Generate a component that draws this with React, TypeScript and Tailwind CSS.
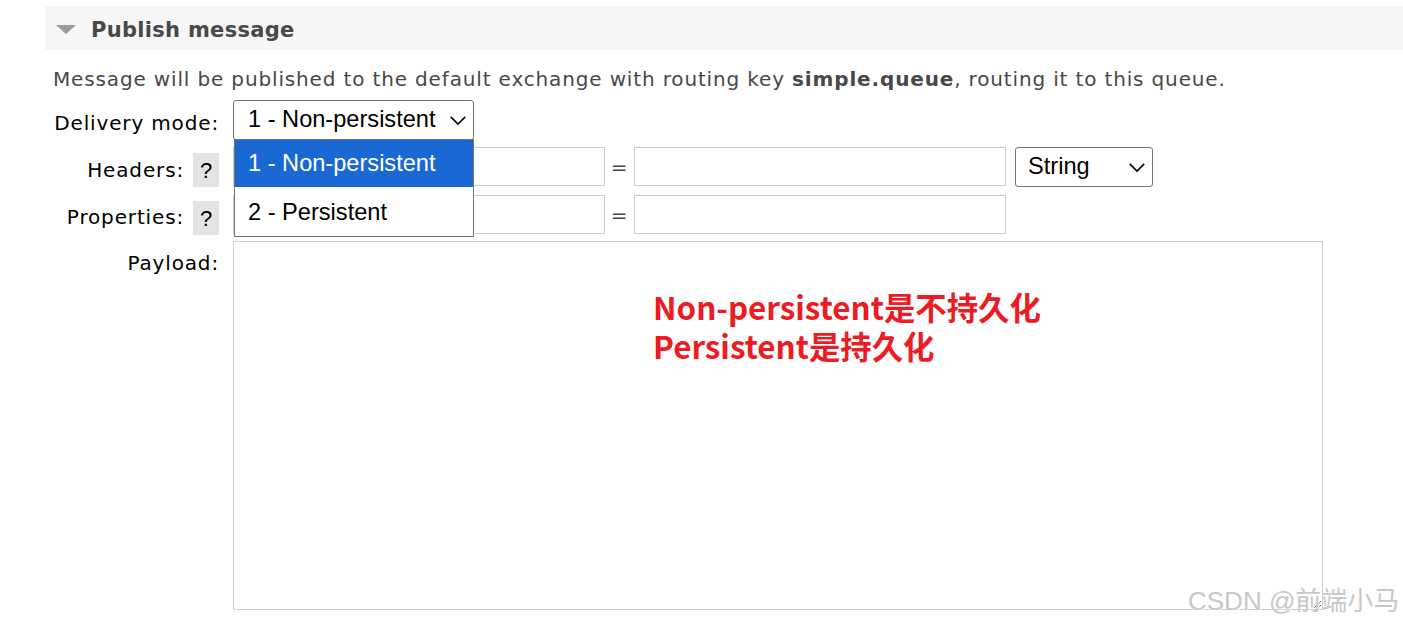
import React from "react";

const verdana = { fontFamily: '"DejaVu Sans", Verdana, sans-serif' };

function Chevron({ className }: { className?: string }) {
  return (
    <svg viewBox="0 0 20 12" className={className} fill="none" stroke="currentColor" strokeWidth="1.7">
      <path d="M2 2 L10 10 L18 2" />
    </svg>
  );
}

function HelpBox() {
  return (
    <span className="flex h-[34px] w-[26px] items-center justify-center bg-[#e4e4e4] text-[22px] tracking-normal text-black font-['Liberation_Sans',sans-serif]">
      ?
    </span>
  );
}

function KeyValueRow() {
  return (
    <div className="flex items-center">
      <input className="h-[39px] w-[372px] border border-[#cccccc] bg-white outline-none" />
      <span className="w-[29px] text-center text-[20px] text-[#484848]">=</span>
      <input className="h-[39px] w-[372px] border border-[#cccccc] bg-white outline-none" />
    </div>
  );
}

export default function App() {
  return (
    <div className="relative h-[626px] w-[1403px] overflow-hidden bg-white" style={verdana}>
      {/* Section header */}
      <div className="ml-[45px] mt-[6px] flex h-[44px] items-center bg-[#f6f6f6] pl-[11px]">
        <svg width="20" height="10" viewBox="0 0 20 10" className="mt-[3px]">
          <polygon points="0,0 20,0 10,9" fill="#9a9a9a" />
        </svg>
        <h2 className="ml-[15px] mt-[5px] text-[21px] font-bold tracking-[0.3px] text-[#484848]">Publish message</h2>
      </div>

      <div className="pl-[53px] tracking-[0.85px]">
        <p className="mt-[16px] text-[20px] leading-[26px] text-[#484848]">
          Message will be published to the default exchange with routing key{" "}
          <b>simple.queue</b>, routing it to this queue.
        </p>

        <div className="mt-[8px] grid grid-cols-[166px_1fr] gap-x-[14px] text-[20px] text-black">
          {/* Delivery mode */}
          <label className="mt-[8px] text-right">Delivery mode:</label>
          <div className="relative h-[40px]">
            <div className="flex h-[40px] w-[241px] items-center justify-between rounded-[3px] border border-[#767676] bg-white pl-[14px] pr-[6px] text-[23.6px] tracking-normal font-['Liberation_Sans',sans-serif]">
              <span>1 - Non-persistent</span>
              <Chevron className="h-[11px] w-[18px]" />
            </div>
            {/* Open dropdown list */}
            <div className="absolute left-[1px] top-[39px] z-10 w-[240px] border border-[#767676] bg-white text-[23.6px] tracking-normal font-['Liberation_Sans',sans-serif]">
              <div className="flex h-[47px] items-center bg-[#1a68d3] pl-[13px] pt-[1px] text-white">1 - Non-persistent</div>
              <div className="flex h-[49px] items-center pl-[13px] pt-[2px] text-black">2 - Persistent</div>
            </div>
          </div>

          {/* Headers */}
          <div className="mt-[7px] flex items-center justify-end gap-[9px]">
            <span className="mt-[5px]">Headers:</span>
            <span className="mt-[6px]"><HelpBox /></span>
          </div>
          <div className="mt-[7px] flex items-start">
            <KeyValueRow />
            <div className="ml-[9px] flex h-[40px] w-[138px] items-center justify-between rounded-[3px] border border-[#767676] bg-white pl-[12px] pr-[6px] text-[23.6px] tracking-normal font-['Liberation_Sans',sans-serif]">
              <span>String</span>
              <Chevron className="h-[11px] w-[18px]" />
            </div>
          </div>

          {/* Properties */}
          <div className="mt-[8px] flex items-center justify-end gap-[9px]">
            <span className="mt-[3px]">Properties:</span>
            <span className="mt-[6px]"><HelpBox /></span>
          </div>
          <div className="mt-[8px] flex items-start">
            <KeyValueRow />
          </div>

          {/* Payload */}
          <label className="mt-[13px] text-right">Payload:</label>
          <textarea className="mt-[6px] h-[369px] w-[1090px] border border-[#cccccc] bg-white outline-none" />
        </div>
      </div>

      {/* Annotation */}
      <div className="absolute left-[653px] top-[287px] text-[31.4px] font-bold leading-[39px] text-[#ed1c24] font-['Noto_Sans_CJK_SC',sans-serif]">
        <p>Non-persistent是不持久化</p>
        <p>Persistent是持久化</p>
      </div>

      {/* Watermark */}
      <div className="absolute left-[1188px] top-[582px] text-[26px] text-[#c8c8c8] [text-shadow:1px_1px_1px_#ffffff] font-['Liberation_Sans','Noto_Sans_CJK_SC',sans-serif]">
        CSDN @前端小马
      </div>
    </div>
  );
}
